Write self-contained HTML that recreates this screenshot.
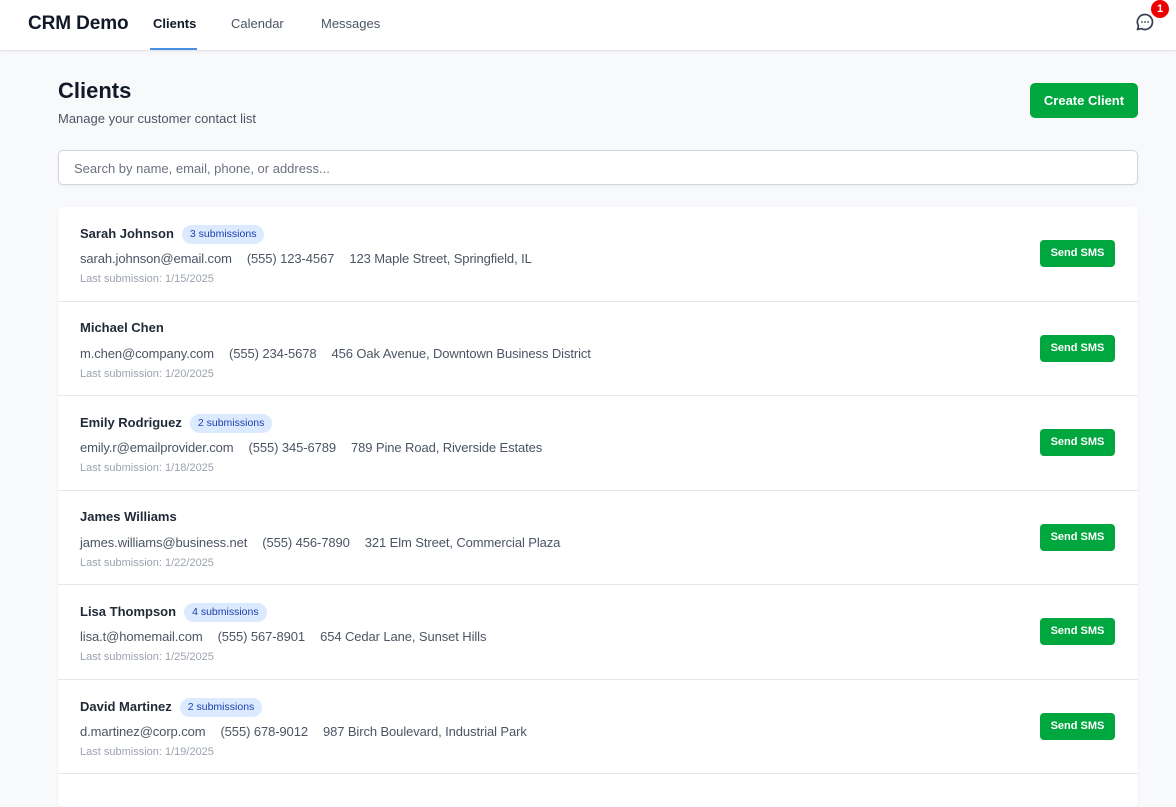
<!DOCTYPE html>
<html><head><style>
*{box-sizing:border-box;margin:0;padding:0}
body{width:1176px;height:789px;overflow:hidden;background:#f8f9fb;font-family:"Liberation Sans",sans-serif;position:relative}
.nav{position:absolute;top:0;left:0;width:1176px;height:51px;background:#fff;border-bottom:1px solid #e5e7eb;box-shadow:0 1px 3px rgba(0,0,0,.06)}
.logo{position:absolute;left:28px;top:13px;font-size:19px;font-weight:bold;color:#111827;letter-spacing:-0.1px}
.nl{position:absolute;top:16px;font-size:13px;color:#4b5563}
.act{color:#111827;font-weight:bold}
.ul{position:absolute;left:150px;top:48px;width:47px;height:2px;background:#4a90e2}
.badge{position:absolute;left:1151px;top:0;width:18px;height:18px;border-radius:50%;background:#e00;color:#fff;font-size:11px;font-weight:bold;text-align:center;line-height:18px}
h1{position:absolute;left:58px;top:78px;font-size:22px;color:#111827}
.sub{position:absolute;left:58px;top:111px;font-size:13px;color:#4b5563}
.cc{position:absolute;left:1030px;top:83px;width:108px;height:35px;background:#00a63e;border-radius:5px;color:#fff;font-size:13px;font-weight:bold;text-align:center;line-height:35px}
.search{position:absolute;left:58px;top:150px;width:1080px;height:35px;background:#fff;border:1px solid #d1d5db;border-radius:5px;box-shadow:0 1px 2px rgba(0,0,0,.06);font-size:13px;color:#6b7280;padding:10px 15px}
.list{position:absolute;left:58px;top:207px;width:1080px;height:600px;background:#fff;border-radius:5px;box-shadow:0 1px 2px rgba(0,0,0,.06)}
.row{height:94.5px;border-bottom:1px solid #e5e7eb;position:relative}
.nm{position:absolute;left:22px;top:18px;font-size:13px;font-weight:bold;color:#1f2937}
.pill{display:inline-block;margin-left:8px;padding:0 8px;height:19px;line-height:19px;border-radius:10px;background:#dbeafe;color:#1e40af;font-size:10.5px;font-weight:normal;vertical-align:1px}
.ct{position:absolute;left:22px;top:44px;font-size:13px;color:#4b5563;letter-spacing:-0.1px}
.ct span{margin-right:15px}
.ls{position:absolute;left:22px;top:66px;font-size:11px;color:#9ca3af}
.sms{position:absolute;left:982px;top:33px;width:75px;height:27px;background:#00a63e;border-radius:4px;color:#fff;font-size:11px;font-weight:bold;text-align:center;line-height:27px}
</style></head><body>
<div class="nav">
<div class="logo">CRM Demo</div>
<div class="nl act" style="left:153px">Clients</div>
<div class="nl" style="left:231px">Calendar</div>
<div class="nl" style="left:321px">Messages</div>
<div class="ul"></div>
<svg style="position:absolute;left:1135px;top:12px" width="20" height="20" viewBox="0 0 20 20"><path d="M10 2.5a7.5 7.5 0 1 1-3.6 14.1L2.5 17.5l1-3.6A7.5 7.5 0 0 1 10 2.5z" fill="none" stroke="#374151" stroke-width="1.7" stroke-linejoin="round"/><circle cx="7" cy="10" r="0.9" fill="#374151"/><circle cx="10" cy="10" r="0.9" fill="#374151"/><circle cx="13" cy="10" r="0.9" fill="#374151"/></svg>
<div class="badge">1</div>
</div>
<h1>Clients</h1>
<div class="sub">Manage your customer contact list</div>
<div class="cc">Create Client</div>
<div class="search">Search by name, email, phone, or address...</div>
<div class="list">
<div class="row"><div class="nm">Sarah Johnson<span class="pill">3 submissions</span></div><div class="ct"><span>sarah.johnson@email.com</span><span>(555) 123-4567</span><span>123 Maple Street, Springfield, IL</span></div><div class="ls">Last submission: 1/15/2025</div><div class="sms">Send SMS</div></div>
<div class="row"><div class="nm">Michael Chen</div><div class="ct"><span>m.chen@company.com</span><span>(555) 234-5678</span><span>456 Oak Avenue, Downtown Business District</span></div><div class="ls">Last submission: 1/20/2025</div><div class="sms">Send SMS</div></div>
<div class="row"><div class="nm">Emily Rodriguez<span class="pill">2 submissions</span></div><div class="ct"><span>emily.r@emailprovider.com</span><span>(555) 345-6789</span><span>789 Pine Road, Riverside Estates</span></div><div class="ls">Last submission: 1/18/2025</div><div class="sms">Send SMS</div></div>
<div class="row"><div class="nm">James Williams</div><div class="ct"><span>james.williams@business.net</span><span>(555) 456-7890</span><span>321 Elm Street, Commercial Plaza</span></div><div class="ls">Last submission: 1/22/2025</div><div class="sms">Send SMS</div></div>
<div class="row"><div class="nm">Lisa Thompson<span class="pill">4 submissions</span></div><div class="ct"><span>lisa.t@homemail.com</span><span>(555) 567-8901</span><span>654 Cedar Lane, Sunset Hills</span></div><div class="ls">Last submission: 1/25/2025</div><div class="sms">Send SMS</div></div>
<div class="row"><div class="nm">David Martinez<span class="pill">2 submissions</span></div><div class="ct"><span>d.martinez@corp.com</span><span>(555) 678-9012</span><span>987 Birch Boulevard, Industrial Park</span></div><div class="ls">Last submission: 1/19/2025</div><div class="sms">Send SMS</div></div>
</div>
</body></html>
